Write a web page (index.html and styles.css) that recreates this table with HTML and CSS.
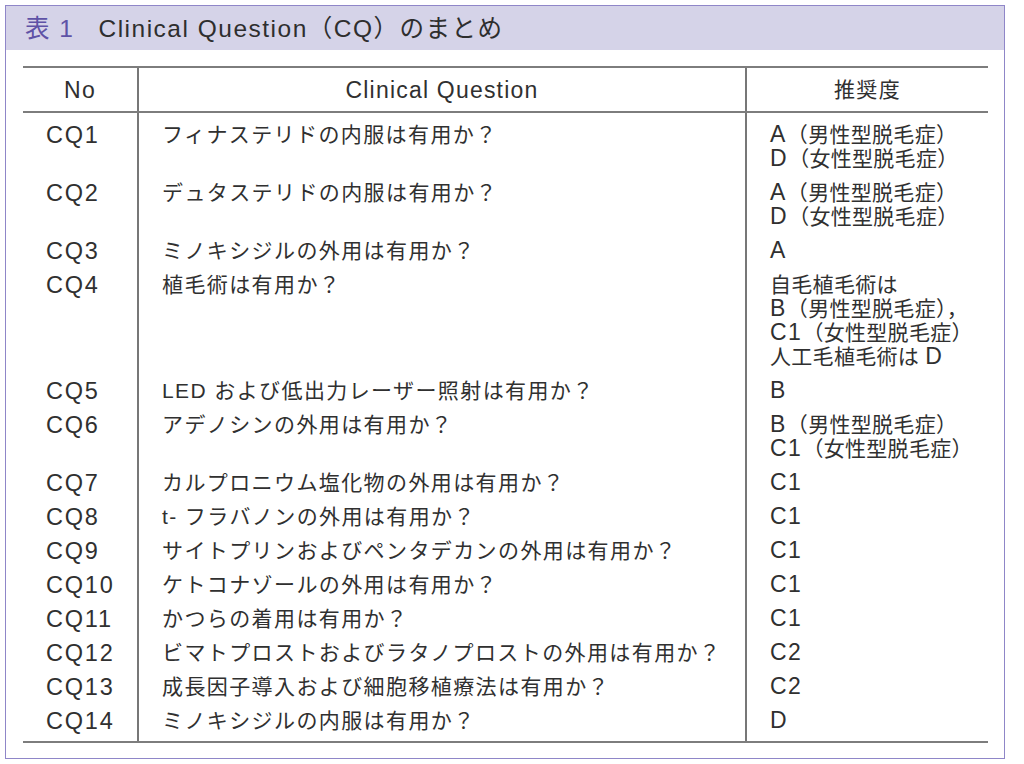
FILE: index.html
```html
<!DOCTYPE html>
<html lang="ja">
<head>
<meta charset="utf-8">
<title>表1 Clinical Question（CQ）のまとめ</title>
<link rel="stylesheet" href="styles.css">
</head>
<body>
<div class="frame">
  <div class="title-bar">
    <span class="tnum">表 1</span><span class="ttext">Clinical Question（CQ）のまとめ</span>
  </div>
  <div class="content">
    <table class="cq">
      <colgroup>
        <col class="c-no"><col class="c-q"><col class="c-r">
      </colgroup>
      <thead>
        <tr><th class="h-lat">No</th><th class="h-lat">Clinical Question</th><th>推奨度</th></tr>
      </thead>
      <tbody>
        <tr><td>CQ1</td><td>フィナステリドの内服は有用か？</td><td><span class="g">A</span>（男性型脱毛症）<br><span class="g">D</span>（女性型脱毛症）</td></tr>
        <tr><td>CQ2</td><td>デュタステリドの内服は有用か？</td><td><span class="g">A</span>（男性型脱毛症）<br><span class="g">D</span>（女性型脱毛症）</td></tr>
        <tr><td>CQ3</td><td>ミノキシジルの外用は有用か？</td><td><span class="g">A</span></td></tr>
        <tr><td>CQ4</td><td>植毛術は有用か？</td><td>自毛植毛術は<br><span class="g">B</span>（男性型脱毛症），<br><span class="g">C1</span>（女性型脱毛症）<br>人工毛植毛術は <span class="g">D</span></td></tr>
        <tr><td>CQ5</td><td>LED および低出力レーザー照射は有用か？</td><td><span class="g">B</span></td></tr>
        <tr><td>CQ6</td><td>アデノシンの外用は有用か？</td><td><span class="g">B</span>（男性型脱毛症）<br><span class="g">C1</span>（女性型脱毛症）</td></tr>
        <tr><td>CQ7</td><td>カルプロニウム塩化物の外用は有用か？</td><td><span class="g">C1</span></td></tr>
        <tr><td>CQ8</td><td>t- フラバノンの外用は有用か？</td><td><span class="g">C1</span></td></tr>
        <tr><td>CQ9</td><td>サイトプリンおよびペンタデカンの外用は有用か？</td><td><span class="g">C1</span></td></tr>
        <tr><td>CQ10</td><td>ケトコナゾールの外用は有用か？</td><td><span class="g">C1</span></td></tr>
        <tr><td>CQ11</td><td>かつらの着用は有用か？</td><td><span class="g">C1</span></td></tr>
        <tr><td>CQ12</td><td>ビマトプロストおよびラタノプロストの外用は有用か？</td><td><span class="g">C2</span></td></tr>
        <tr><td>CQ13</td><td>成長因子導入および細胞移植療法は有用か？</td><td><span class="g">C2</span></td></tr>
        <tr><td>CQ14</td><td>ミノキシジルの内服は有用か？</td><td><span class="g">D</span></td></tr>
      </tbody>
    </table>
  </div>
</div>
</body>
</html>
```

FILE: styles.css
```css
html, body {
  margin: 0;
  padding: 0;
  background: #ffffff;
}

body {
  font-family: "Liberation Sans", "Noto Sans CJK JP", sans-serif;
  color: #303030;
}

.frame {
  box-sizing: border-box;
  margin: 5px 0 0 5px;
  width: 1000px;
  height: 754px;
  border: 1.5px solid #8f86c8;
}

.title-bar {
  box-sizing: border-box;
  height: 44px;
  background: #d5d3e8;
  display: flex;
  align-items: center;
  padding-left: 19px;
  padding-bottom: 4px;
  font-size: 24.5px;
  letter-spacing: 1.5px;
}

.tnum {
  color: #5e52a6;
  margin-right: 24px;
}

.ttext {
  color: #2e2e2e;
}

.content {
  padding: 16px 0 0 17px;
}

.cq {
  width: 965px;
  border-collapse: collapse;
  font-size: 21px;
  letter-spacing: 1.4px;
  line-height: 24px;
}

.c-no { width: 115px; }
.c-q { width: 608px; }
.c-r { width: 242px; }

.cq th {
  font-weight: normal;
  height: 43px;
  padding: 0;
  text-align: center;
  border-top: 2px solid #7d7d7d;
  border-bottom: 2px solid #7d7d7d;
  vertical-align: middle;
}

.cq th.h-lat {
  font-size: 23px;
  letter-spacing: 1.2px;
}

.cq th + th,
.cq td + td {
  border-left: 2px solid #777777;
}

.cq td {
  height: 24px;
  padding: 5px 0 5px 23px;
  vertical-align: top;
  text-align: left;
}

.cq td:first-child {
  padding-left: 23px;
  font-size: 23.5px;
  letter-spacing: 1.8px;
}

.cq td:nth-child(3) {
  letter-spacing: 0.3px;
}

.cq .g {
  font-size: 23px;
  line-height: 20px;
  letter-spacing: 1.5px;
}

.cq tbody tr:first-child td {
  padding-top: 10px;
}

.cq tbody tr:last-child td {
  padding-bottom: 8px;
  border-bottom: 2px solid #7d7d7d;
}
```
